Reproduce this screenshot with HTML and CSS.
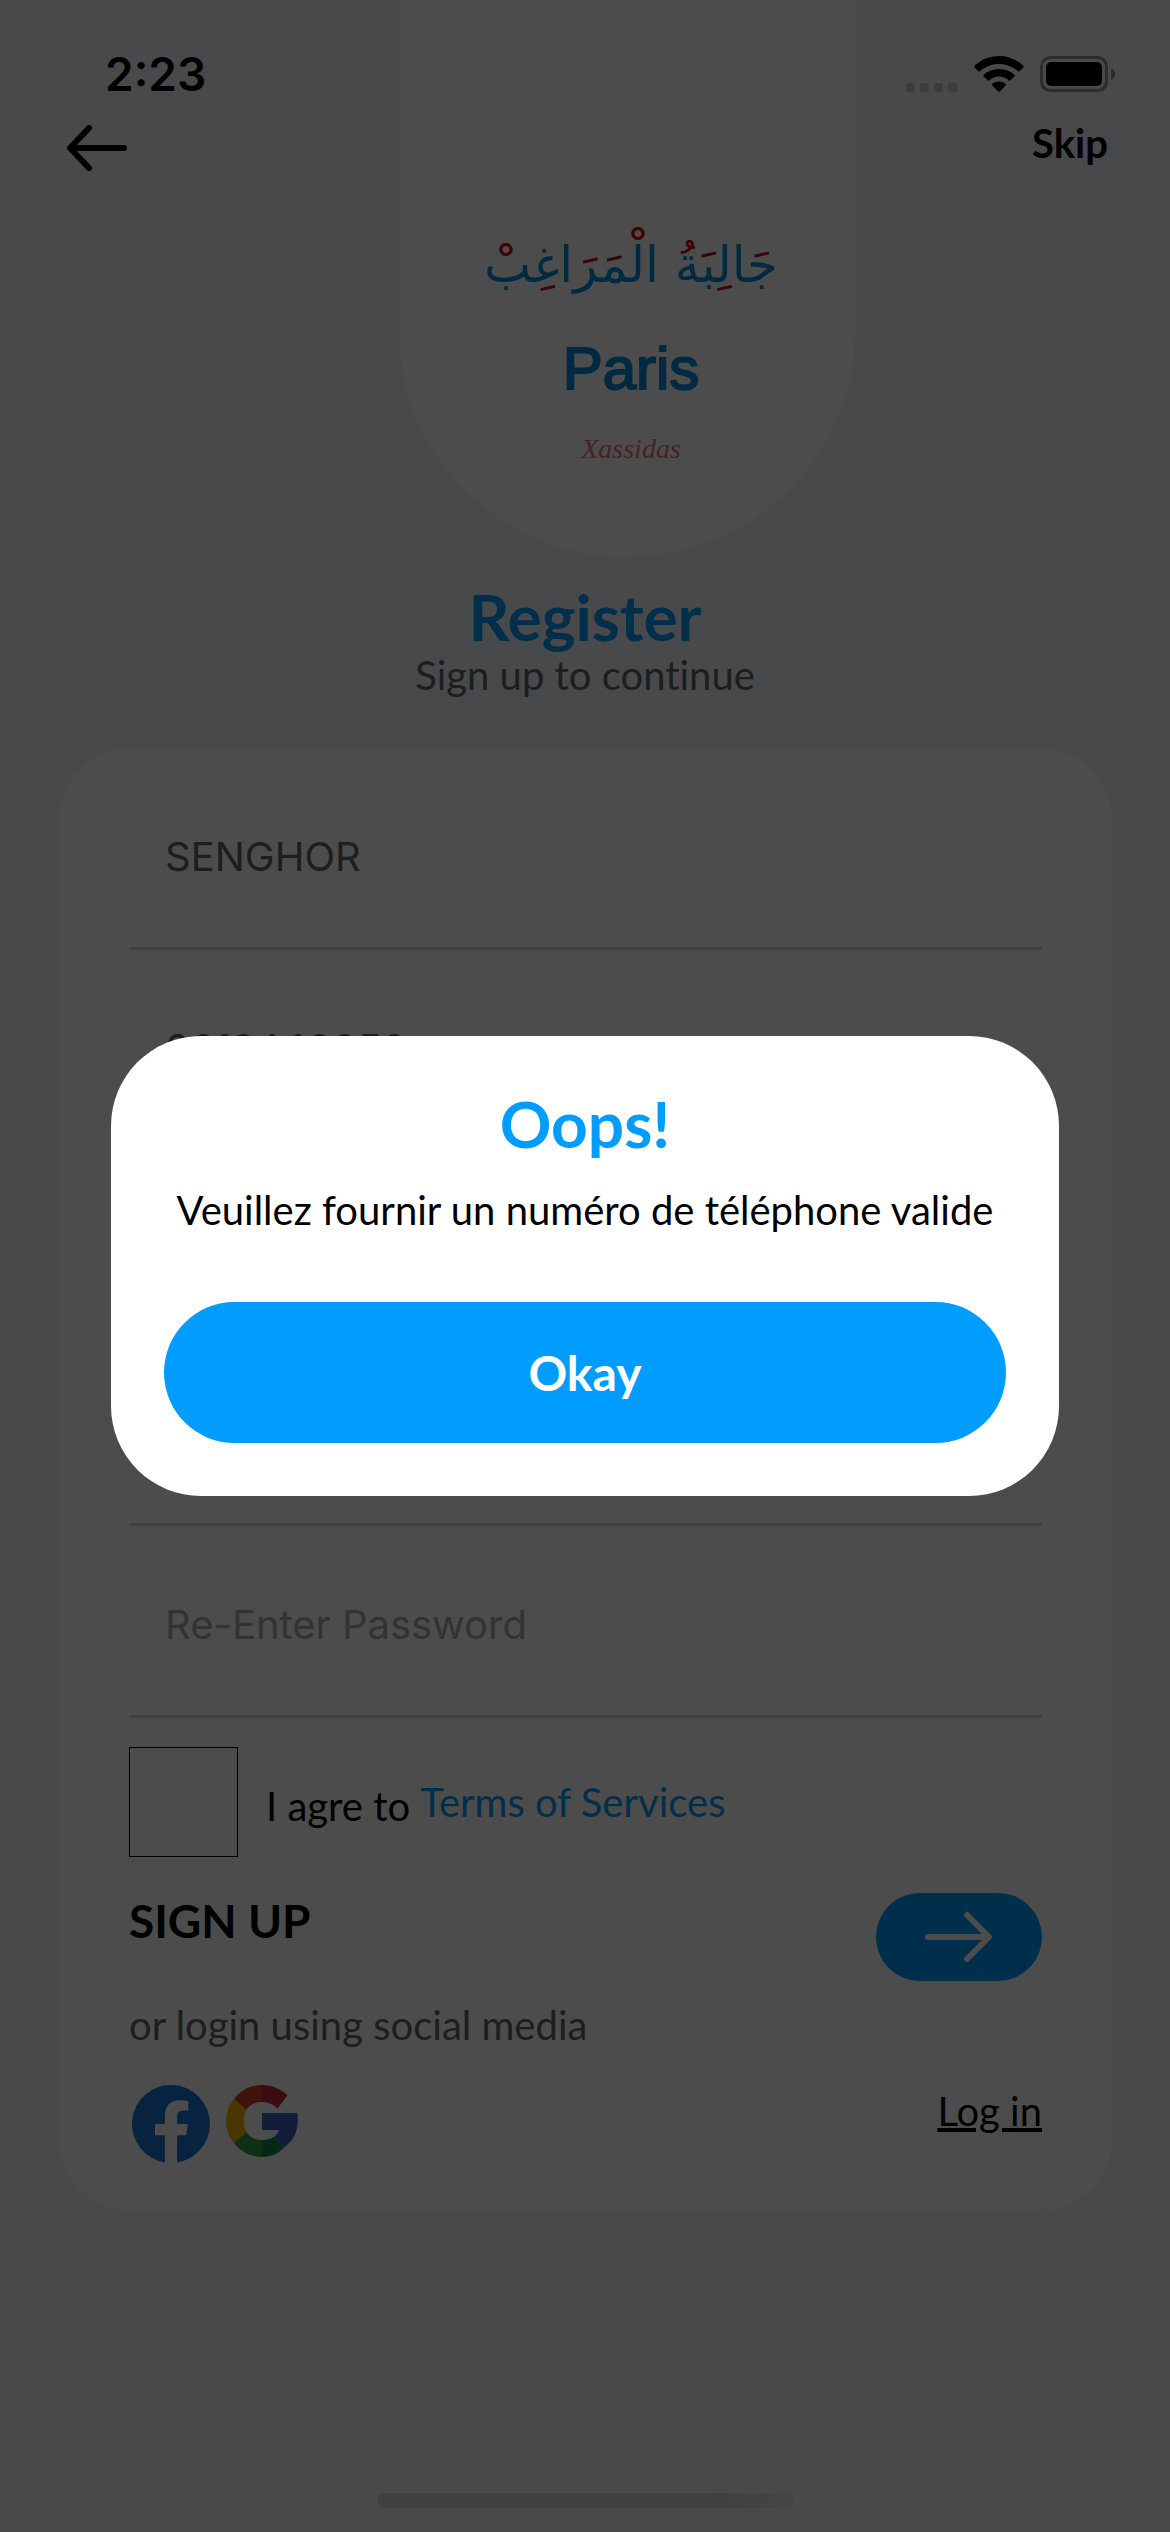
FILE: index.html
```html
<!DOCTYPE html>
<html lang="en">
<head>
<meta charset="utf-8">
<meta name="viewport" content="width=device-width, initial-scale=1">
<title>Register</title>
<link rel="stylesheet" href="styles.css">
</head>
<body>
<main class="screen">
  <header class="top">
    <div class="top-left">
      <time class="clock">2:23</time>
      <button class="back" type="button" aria-label="Back">
        <svg width="60" height="46" viewBox="0 0 60 46" fill="none" stroke="#000" stroke-width="6" stroke-linecap="round" stroke-linejoin="round"><path d="M57 23H4M22 3 3 23l19 20"/></svg>
      </button>
    </div>
    <div class="logo">
      <div class="logo-ar" lang="ar" dir="rtl">جَالِبَةُ الْمَرَاغِبْ</div>
      <div class="logo-city">Paris</div>
      <div class="logo-sub">Xassidas</div>
    </div>
    <div class="top-right">
      <div class="status">
        <svg width="52" height="36" viewBox="0 0 52 36" fill="#c6c9cb"><rect y="27" width="9" height="9" rx="3"/><rect x="14" y="27" width="9" height="9" rx="3"/><rect x="28" y="27" width="9" height="9" rx="3"/><rect x="42" y="27" width="9" height="9" rx="3"/></svg>
        <svg width="50" height="37" viewBox="0 0 50 37"><path d="M25 0C15.500 0 7 3.700.6 9.700c-.5.500-.5 1.200 0 1.700l3.800 3.800c.5.500 1.100.5 1.600 0C11 10.700 17.700 8 25 8s14 2.700 19 7.200c.5.500 1.100.5 1.600 0l3.800-3.800c.5-.5.5-1.200 0-1.700C43 3.700 34.500 0 25 0Zm0 13c-5.900 0-11.200 2.200-15.300 5.800-.5.500-.5 1.200 0 1.700l3.900 3.800c.4.500 1.100.5 1.600.1C17.800 22 21.300 20.600 25 20.600s7.200 1.400 9.800 3.800c.5.400 1.200.4 1.600-.1l3.900-3.800c.5-.5.5-1.200 0-1.700C36.200 15.200 30.900 13 25 13Zm0 12.500c-2.500 0-4.800.9-6.600 2.300-.5.400-.5 1.100-.1 1.600l5.900 6.200c.4.500 1.200.5 1.600 0l5.900-6.200c.4-.5.4-1.200-.1-1.600-1.800-1.400-4.100-2.300-6.600-2.300Z"/></svg>
        <svg width="76" height="36" viewBox="0 0 76 36"><rect x="1.500" y="1.500" width="65" height="33" rx="9" fill="none" stroke="#919496" stroke-width="3"/><rect x="6" y="6" width="56" height="24" rx="5"/><path d="M71 12c2.500.8 4 3.200 4 6s-1.500 5.200-4 6Z" fill="#919496"/></svg>
      </div>
      <a class="skip" href="#skip">Skip</a>
    </div>
  </header>

  <div class="heading">
    <h1>Register</h1>
    <p>Sign up to continue</p>
  </div>

  <form class="card">
    <input class="field" type="text" aria-label="Name" value="SENGHOR">
    <input class="field" type="tel" aria-label="Phone number" value="0612440050">
    <input class="field" type="email" aria-label="Email">
    <input class="field" type="password" aria-label="Password">
    <input class="field" type="password" aria-label="Re-Enter Password" placeholder="Re-Enter Password">
    <div class="agree">
      <input id="agree" type="checkbox">
      <label for="agree">I agre to</label>
      <a href="#terms">Terms of Services</a>
    </div>
    <div class="submit">
      <h2>SIGN UP</h2>
      <button type="submit" aria-label="Sign up">
        <svg width="68" height="52" viewBox="0 0 68 52" fill="none" stroke="#fff" stroke-width="6" stroke-linecap="round" stroke-linejoin="round"><path d="M3 26h60M42 4l22 22-22 22"/></svg>
      </button>
    </div>
    <p class="or">or login using social media</p>
    <div class="social">
      <button type="button" aria-label="Facebook">
        <svg width="78" height="78" viewBox="0 0 78 78"><path fill="#1877d8" d="M78 39A39 39 0 1 0 32.900 77.500V50.300H23V39h9.900v-8.600c0-9.800 5.800-15.200 14.700-15.200 4.300 0 8.700.8 8.700.8v9.600h-4.900c-4.800 0-6.300 3-6.300 6.100V39h10.800l-1.700 11.300h-9.100v27.200A39 39 0 0 0 78 39Z"/></svg>
      </button>
      <button type="button" aria-label="Google">
        <svg width="72" height="72" viewBox="0 0 72 72"><path fill="#d9412e" d="M36 0v17c-7 0-12.500 3-15.700 8.200L8 14C14.500 5.300 24.500 0 36 0Z"/><path fill="#c8233f" d="M36 0c10 0 18.500 3.700 25.500 10.300L51.500 23.500C47.300 19.300 42.300 17 36 17Z"/><path fill="#f5b400" d="M8 14l12.300 11.200c-3.400 6.500-3.400 15.600 0 21.900L8 58C-2.600 45-2.600 27 8 14Z"/><path fill="#34a04f" d="M8 58l12.300-10.900C23.500 52 29 55 36 55v17C24.500 72 14.500 66.700 8 58Z"/><path fill="#0a8a4c" d="M36 55c4.800 0 8.500-1 11.700-3L58 62.500C52.500 68.500 45 72 36 72Z"/><path fill="#3f62c0" d="M36 28h35.300c2 14-1.800 26.500-13.300 34.500L47.700 52c2.600-1.700 4.500-4.200 5.300-7H36Z"/></svg>
      </button>
      <a href="#login">Log in</a>
    </div>
  </form>
  <div class="home-bar"></div>
</main>

<div class="overlay">
  <section class="dialog" role="alertdialog" aria-modal="true" aria-labelledby="dialog-title" aria-describedby="dialog-text">
    <h2 id="dialog-title">Oops!</h2>
    <p id="dialog-text">Veuillez fournir un numéro de téléphone valide</p>
    <button type="button">Okay</button>
  </section>
</div>
</body>
</html>
```

FILE: styles.css
```css
* {
  box-sizing: border-box;
}

body {
  margin: 0;
  font-family: "Lato", "Liberation Sans", sans-serif;
  font-size: 40px;
  line-height: 52px;
  color: #000;
}

h1,
h2,
p {
  margin: 0;
}

a {
  color: inherit;
  text-decoration: none;
}

button {
  display: flex;
  align-items: center;
  justify-content: center;
  padding: 0;
  border: 0;
  background: none;
  font: inherit;
}

svg {
  display: block;
}

.screen {
  display: flex;
  flex-direction: column;
  min-height: 100vh;
  background: #f1f6fa;
}

.top {
  display: grid;
  grid-template-columns: 399fr 456fr 315fr;
}

.top-left {
  padding: 50px 0 0 67px;
}

.clock {
  display: block;
  padding-left: 38px;
  font-family: "Inter", sans-serif;
  font-size: 46px;
  font-weight: 600;
  line-height: 48px;
}

.back {
  margin-top: 27px;
}

.logo {
  display: flex;
  flex-direction: column;
  align-items: center;
  height: 557px;
  padding: 213px 0 0 8px;
  border-radius: 0 0 228px 228px;
  background: #fff;
  color: #008ade;
}

/* Blue letters with the vowel marks picked out in red */
.logo-ar {
  --mark: linear-gradient(#d00, #d00);
  font-family: "DejaVu Sans", sans-serif;
  font-size: 50px;
  line-height: 104px;
  background:
    var(--mark) 15px 29px / 15px 15px no-repeat,
    var(--mark) 56px 72px / 16px 8px no-repeat,
    var(--mark) 98px 44px / 17px 8px no-repeat,
    var(--mark) 122px 41px / 16px 9px no-repeat,
    var(--mark) 146px 14px / 15px 15px no-repeat,
    var(--mark) 196px 27px / 15px 15px no-repeat,
    var(--mark) 217px 38px / 16px 9px no-repeat,
    var(--mark) 233px 71px / 16px 9px no-repeat,
    var(--mark) 270px 38px / 16px 8px no-repeat,
    #008ade;
  -webkit-background-clip: text;
  background-clip: text;
  -webkit-text-fill-color: transparent;
}

.logo-city {
  font-family: "Liberation Sans", sans-serif;
  font-size: 60px;
  line-height: 104px;
  -webkit-text-stroke: 2px;
}

.logo-sub {
  font-family: "Liberation Serif", serif;
  font-size: 28px;
  font-style: italic;
  line-height: 56px;
  color: #e07a7a;
}

.top-right {
  display: flex;
  flex-direction: column;
  align-items: flex-end;
  padding: 56px 54px 0 0;
}

.status {
  display: flex;
  gap: 16px;
}

.skip {
  margin: 24px 8px 0 0;
  font-weight: 700;
}

.heading {
  padding-top: 28px;
  text-align: center;
  font-variant-ligatures: none;
  color: #666;
}

.heading h1,
.dialog h2 {
  font-size: 64px;
  font-weight: 700;
  line-height: 64px;
  color: #009dff;
}

.card {
  display: flex;
  flex-direction: column;
  margin: 47px 58px 0 59px;
  padding: 10px 70px 48px;
  border-radius: 72px;
  background: #fff;
}

.field {
  width: 100%;
  height: 192px;
  padding: 8px 36px 0;
  border: 0;
  border-bottom: 3px solid #d9d9d9;
  border-radius: 0;
  outline: 0;
  background: none;
  font-family: "Inter", sans-serif;
  font-size: 40px;
  color: #666;
}

.field::placeholder {
  color: #aaa;
  opacity: 1;
}

.agree {
  display: flex;
  align-items: center;
  margin-top: 29px;
}

.agree input {
  appearance: none;
  width: 109px;
  height: 110px;
  margin: 0 28px 0 0;
  border: 1px solid #000;
}

.agree label {
  padding-top: 8px;
}

.agree a {
  margin-left: 10px;
  color: #009dff;
}

.submit {
  display: flex;
  justify-content: space-between;
  align-items: flex-start;
  margin-top: 36px;
}

.submit h2 {
  font-size: 46px;
  font-weight: 700;
  line-height: 56px;
}

.submit button {
  width: 166px;
  height: 88px;
  border-radius: 44px;
  background: #009dff;
}

.or {
  margin-top: 18px;
  color: #666;
}

.social {
  display: flex;
  align-items: flex-start;
  gap: 16px;
  margin-top: 34px;
  padding-left: 3px;
}

.social a {
  margin-left: auto;
  text-decoration: underline;
  text-decoration-thickness: 4px;
}

.home-bar {
  width: 417px;
  height: 15px;
  margin: auto auto 24px;
  border-radius: 8px;
  background: linear-gradient(100deg, #d6d8d6 80%, #e8e9ec);
}

.overlay {
  position: fixed;
  inset: 0;
  display: flex;
  align-items: center;
  justify-content: center;
  background: rgba(0, 0, 0, 0.7);
}

.dialog {
  width: 81%;
  padding: 56px 53px 53px;
  border-radius: 90px;
  background: #fff;
  text-align: center;
}

.dialog p {
  margin: 28px 0 66px;
}

.dialog button {
  width: 100%;
  height: 141px;
  border-radius: 71px;
  background: #009dff;
  font-size: 48px;
  font-weight: 700;
  color: #fff;
}
```
